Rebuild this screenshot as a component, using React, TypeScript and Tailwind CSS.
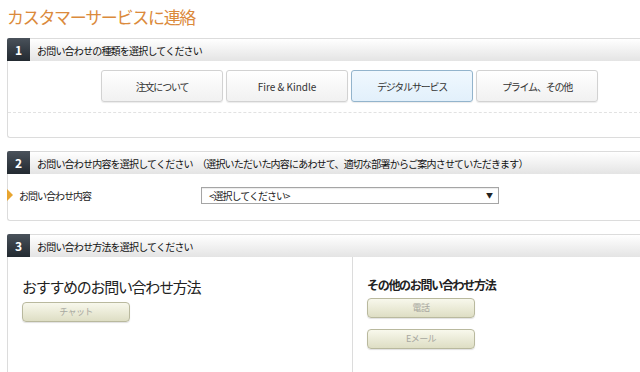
import { ReactNode } from "react";

const jp = { fontFamily: '"Noto Sans CJK JP", "Noto Sans", sans-serif' };

const SectionHeader = ({ num, children }: { num: string; children: ReactNode }) => (
	<div className="flex h-[23px]">
		<div className="w-[23px] flex items-center justify-center bg-gradient-to-b from-[#4a525b] to-[#232a31] text-white text-[12px] font-bold rounded-tl-[2px]">
			{num}
		</div>
		<div className="flex-1 flex items-center pl-[7px] border-t border-[#dcdcdc] bg-gradient-to-b from-white to-[#e4e4e4] text-[10px] tracking-[-0.8px] text-[#111]">
			{children}
		</div>
	</div>
);

const TypeButton = ({ label, active, latin }: { label: string; active?: boolean; latin?: boolean }) => (
	<div
		className={
			(active
				? "border-[#93b4cc] from-[#f0f8fe] to-[#e2f0fb] "
				: "border-[#d2d2d2] from-white to-[#f1f1f1] ") +
			(latin ? "tracking-normal " : "tracking-[-1.2px] ") +
			"w-[122px] h-[32px] flex items-center justify-center rounded-[3px] border bg-gradient-to-b text-[10px] text-[#333] shadow-[0_1px_1px_rgba(0,0,0,0.08)]"
		}
	>
		{label}
	</div>
);

const MethodButton = ({ label }: { label: string }) => (
	<div className="w-[108px] h-[20px] flex items-center justify-center rounded-[4px] border border-[#b9b99e] bg-gradient-to-b from-[#f8f8ec] to-[#dedec4] text-[9px] tracking-[-0.6px] text-[#a8a8a0] shadow-[0_1px_1px_rgba(0,0,0,0.12)]">
		{label}
	</div>
);

export default function App() {
	return (
		<div className="w-[640px] h-[372px] overflow-hidden bg-white" style={jp}>
			<h1 className="pl-[7px] pt-[5px] h-[38px] text-[17px] leading-[24px] tracking-[-1.3px] text-[#db8a3c] font-normal">
				カスタマーサービスに連絡
			</h1>

			{/* step 1 */}
			<div className="ml-[7px] w-[640px]">
				<SectionHeader num="1">お問い合わせの種類を選択してください</SectionHeader>
				<div className="h-[77px] border-l border-b border-[#dcdcdc] rounded-bl-[3px]">
					<div className="flex gap-[3px] pl-[93px] pt-[9px]">
						<TypeButton label="注文について" />
						<TypeButton label="Fire & Kindle" latin />
						<TypeButton label="デジタルサービス" active />
						<TypeButton label="プライム、その他" />
					</div>
					<div className="mt-[10px] border-t border-dashed border-[#e2e2e2]" />
				</div>
			</div>

			{/* step 2 */}
			<div className="ml-[7px] mt-[13px] w-[640px]">
				<SectionHeader num="2">
					お問い合わせ内容を選択してください　（選択いただいた内容にあわせて、適切な部署からご案内させていただきます）
				</SectionHeader>
				<div className="h-[47px] border-l border-b border-[#dcdcdc] rounded-bl-[3px] flex items-start pt-[13px]">
					<div className="flex items-center h-[16px] w-[193px]">
						<span className="w-0 h-0 border-y-[6px] border-y-transparent border-l-[6px] border-l-[#e8a530] -ml-[1px]" />
						<span className="ml-[6px] text-[10px] tracking-[-1px] text-[#222]">お問い合わせ内容</span>
					</div>
					<div className="w-[298px] h-[17px] border border-[#a5a5a5] flex items-center justify-between pl-[7px] pr-[6px] text-[10px] tracking-[-1px] text-[#222] shadow-[inset_0_1px_1px_rgba(0,0,0,0.08)]">
						<span>&lt;選択してください&gt;</span>
						<span className="text-[7px] text-[#222]">▼</span>
					</div>
				</div>
			</div>

			{/* step 3 */}
			<div className="ml-[7px] mt-[13px] w-[640px]">
				<SectionHeader num="3">お問い合わせ方法を選択してください</SectionHeader>
				<div className="h-[120px] border-l border-[#dcdcdc] flex">
					<div className="w-[344px] pl-[14px] pt-[20px]">
						<div className="text-[15px] leading-[20px] tracking-[-1.3px] text-[#222]">おすすめのお問い合わせ方法</div>
						<div className="mt-[5px]">
							<MethodButton label="チャット" />
						</div>
					</div>
					<div className="border-l border-[#dcdcdc] pl-[14px] pt-[20px]">
						<div className="text-[12px] leading-[16px] tracking-[-1.3px] font-bold text-[#222]">その他のお問い合わせ方法</div>
						<div className="mt-[5px] flex flex-col gap-[11px]">
							<MethodButton label="電話" />
							<MethodButton label="Eメール" />
						</div>
					</div>
				</div>
			</div>
		</div>
	);
}
